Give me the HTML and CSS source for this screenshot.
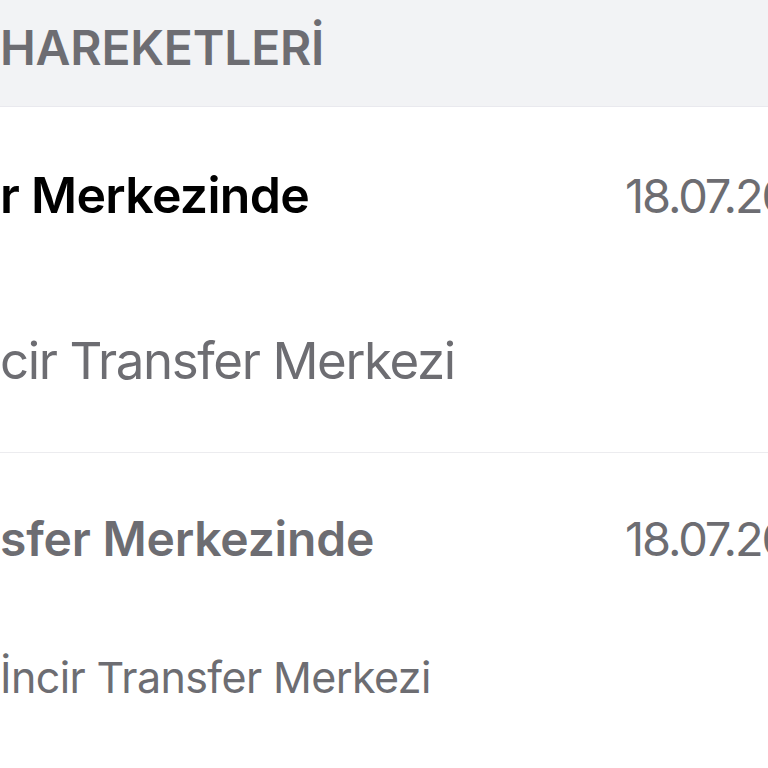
FILE: index.html
```html
<!DOCTYPE html>
<html lang="tr">
<head>
<meta charset="utf-8">
<link rel="stylesheet" href="styles.css">
</head>
<body>
  <div class="screen">
    <header class="section-header">HAREKETLERİ</header>
    <ul class="list">
      <li class="item item-current">
        <div class="item-top">
          <span class="item-title">r Merkezinde</span>
          <span class="item-date">18.07.20</span>
        </div>
        <div class="item-sub">cir Transfer Merkezi</div>
      </li>
      <li class="item item-past">
        <div class="item-top">
          <span class="item-title">sfer Merkezinde</span>
          <span class="item-date">18.07.20</span>
        </div>
        <div class="item-sub">İncir Transfer Merkezi</div>
      </li>
    </ul>
  </div>
</body>
</html>
```

FILE: styles.css
```css
html, body {
  margin: 0;
  padding: 0;
  background: #ffffff;
  overflow: hidden;
}

.screen {
  width: 768px;
  height: 768px;
  overflow: hidden;
  font-family: Inter, "Noto Sans", "Liberation Sans", sans-serif;
  white-space: nowrap;
}

.section-header {
  box-sizing: border-box;
  height: 107px;
  padding-top: 24px;
  font-size: 48px;
  line-height: 48px;
  font-weight: 600;
  letter-spacing: -0.2px;
  color: #6d6d72;
  background: #f2f3f5;
  border-bottom: 1px solid #e9e9ee;
}

.list {
  list-style: none;
  margin: 0;
  padding: 0;
}

.item {
  border-bottom: 1px solid #ececef;
}

.item-top {
  display: flex;
  align-items: baseline;
  justify-content: space-between;
}

.item-title {
  font-weight: 600;
}

.item-date {
  flex: none;
  width: 143px;
  font-size: 47px;
  line-height: 48px;
  font-weight: 400;
  letter-spacing: -2.1px;
  color: #6d6d72;
}

.item-current .item-top {
  padding-top: 63px;
}

.item-current .item-title {
  font-size: 50px;
  line-height: 50px;
  letter-spacing: -0.7px;
  color: #000000;
}

.item-current .item-sub {
  margin-top: 115px;
  padding-bottom: 66px;
  font-size: 51px;
  line-height: 51px;
  letter-spacing: -1.4px;
  color: #6d6d72;
}

.item-past {
  border-bottom: none;
}

.item-past .item-top {
  padding-top: 62px;
}

.item-past .item-title {
  font-size: 48px;
  line-height: 48px;
  letter-spacing: -0.2px;
  color: #6d6d72;
}

.item-past .item-sub {
  margin-top: 93px;
  font-size: 43px;
  line-height: 43px;
  letter-spacing: -0.6px;
  color: #6d6d72;
}
```
